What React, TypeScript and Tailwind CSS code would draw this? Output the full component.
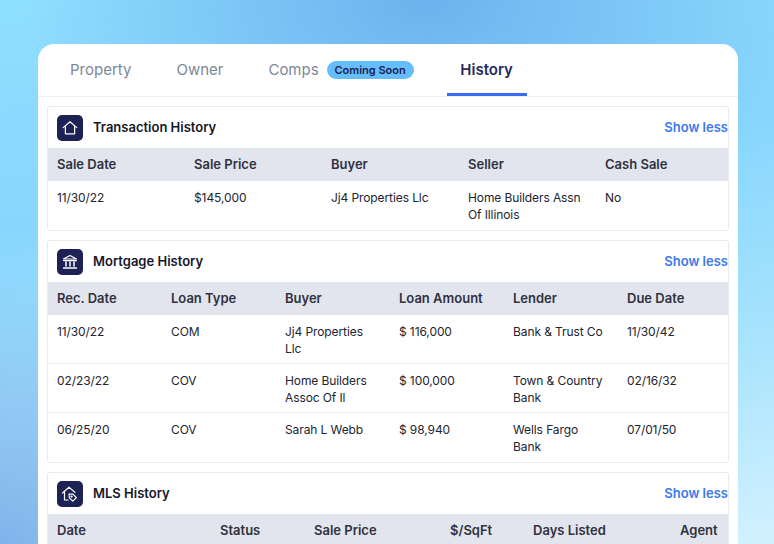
import React from 'react';

const HomeIcon = () => (
  <svg width="16" height="16" viewBox="0 0 16 16" fill="none" stroke="white" strokeWidth="1.2" strokeLinejoin="round" strokeLinecap="round">
    <path d="M1.2 7.6 8 1.8l6.8 5.8" />
    <path d="M3.4 6.4v7.4h9.2V6.4" />
  </svg>
);

const BankIcon = () => (
  <svg width="16" height="16" viewBox="0 0 16 16" fill="none" stroke="white" strokeWidth="1.2" strokeLinejoin="round" strokeLinecap="round">
    <path d="M1.5 5 8 1.5 14.5 5z" />
    <path d="M1.5 6.6h13" />
    <path d="M4 8v4M8 8v4M12 8v4" strokeWidth="1.5" />
    <path d="M1.5 14h13" strokeWidth="1.4" />
  </svg>
);

const TagHomeIcon = () => (
  <svg width="18" height="18" viewBox="0 0 18 18" fill="none" stroke="white" strokeWidth="1.2" strokeLinejoin="round" strokeLinecap="round">
    <path d="M1.5 8 8 2.2 14 7.4" />
    <path d="M3.5 7v8h3.6" />
    <path d="M8 9.2h4l3.4 3.4-3.6 3.6L8.4 12.8z" />
    <circle cx="10.6" cy="11.6" r=".5" />
  </svg>
);

const transactionRows = [['11/30/22', '$145,000', 'Jj4 Properties Llc', 'Home Builders Assn Of Illinois', 'No']];

const mortgageRows = [
  ['11/30/22', 'COM', 'Jj4 Properties Llc', '$ 116,000', 'Bank & Trust Co', '11/30/42'],
  ['02/23/22', 'COV', 'Home Builders Assoc Of Il', '$ 100,000', 'Town & Country Bank', '02/16/32'],
  ['06/25/20', 'COV', 'Sarah L Webb', '$ 98,940', 'Wells Fargo Bank', '07/01/50'],
];

const fiveCols = 'grid-cols-[137px_137px_137px_137px_1fr]';
const sixCols = 'grid-cols-[114px_114px_114px_114px_114px_1fr]';

const SectionHeader = ({ icon, title }: { icon: React.ReactNode; title: string }) => (
  <div className="flex h-[41px] items-center justify-between pl-[9px]">
    <div className="flex items-center gap-[10px]">
      <div className="flex h-[26px] w-[26px] items-center justify-center rounded-[5px] bg-[#1d2254]">{icon}</div>
      <span className="text-[13px] font-semibold text-[#15172a]">{title}</span>
    </div>
    <span className="text-[13px] font-semibold text-[#3b78f2]">Show less</span>
  </div>
);

const HeadRow = ({ cols, labels }: { cols: string; labels: string[] }) => (
  <div className={`grid ${cols} h-[33px] items-center bg-[#e2e5ee] text-[13px] font-semibold text-[#30323f]`}>
    {labels.map((label) => (
      <div key={label} className="pl-[9px]">{label}</div>
    ))}
  </div>
);

const BodyRow = ({ cols, cells, last }: { cols: string; cells: string[]; last?: boolean }) => (
  <div className={`grid ${cols} h-[49px] pt-[8px] text-[12px] leading-[17px] tracking-[-0.1px] text-[#22242f] ${last ? '' : 'border-b border-[#e8eaf0]'}`}>
    {cells.map((cell, i) => (
      <div key={i} className="pl-[9px] pr-[10px]">{cell}</div>
    ))}
  </div>
);

const App = () => {
  return (
    <div className="h-[544px] w-[774px] overflow-hidden bg-[radial-gradient(ellipse_320px_280px_at_0%_100%,#7fb2ea_0%,transparent_100%),radial-gradient(ellipse_400px_230px_at_55%_0%,#6cb2ee_0%,transparent_100%),linear-gradient(172deg,#8fdfff_0%,#88d6fd_35%,#a4e2fd_65%,#d2f1ff_100%)] pt-[44px] font-['Inter','Liberation_Sans',sans-serif]">
      <div className="ml-[38px] h-[520px] w-[700px] rounded-t-[16px] bg-white">
        <div className="flex h-[53px] items-center border-b border-[#eef0f5] pl-[32px] text-[15px] text-[#7c8798]">
          <span>Property</span>
          <span className="ml-[45px]">Owner</span>
          <span className="ml-[45px]">Comps</span>
          <span className="ml-[8px] flex h-[18px] w-[87px] items-center justify-center rounded-full bg-[#66bdfb] text-[11px] font-semibold text-[#1d2254]">Coming Soon</span>
          <div className="ml-[33px] flex h-[52px] w-[80px] items-center justify-center self-start border-b-[3px] border-[#3b6cf0] pt-[3px] font-semibold text-[#272a5c]">History</div>
        </div>

        <div className="flex flex-col gap-[9px] px-[9px] pt-[9px]">
          <section className="rounded-[3px] border border-[#e8eaf0]">
            <SectionHeader icon={<HomeIcon />} title="Transaction History" />
            <HeadRow cols={fiveCols} labels={['Sale Date', 'Sale Price', 'Buyer', 'Seller', 'Cash Sale']} />
            {transactionRows.map((row) => (
              <BodyRow key={row[0]} cols={fiveCols} cells={row} last />
            ))}
          </section>

          <section className="rounded-[3px] border border-[#e8eaf0]">
            <SectionHeader icon={<BankIcon />} title="Mortgage History" />
            <HeadRow cols={sixCols} labels={['Rec. Date', 'Loan Type', 'Buyer', 'Loan Amount', 'Lender', 'Due Date']} />
            {mortgageRows.map((row, i) => (
              <BodyRow key={row[0]} cols={sixCols} cells={row} last={i === mortgageRows.length - 1} />
            ))}
          </section>

          <section className="rounded-[3px] border border-[#e8eaf0]">
            <SectionHeader icon={<TagHomeIcon />} title="MLS History" />
            <div className="grid h-[33px] grid-cols-[163px_94px_136px_83px_147px_1fr] items-center bg-[#e2e5ee] pl-[9px] text-[13px] font-semibold text-[#30323f]">
              <div>Date</div>
              <div>Status</div>
              <div>Sale Price</div>
              <div>$/SqFt</div>
              <div>Days Listed</div>
              <div>Agent</div>
            </div>
          </section>
        </div>
      </div>
    </div>
  );
};

export default App;
